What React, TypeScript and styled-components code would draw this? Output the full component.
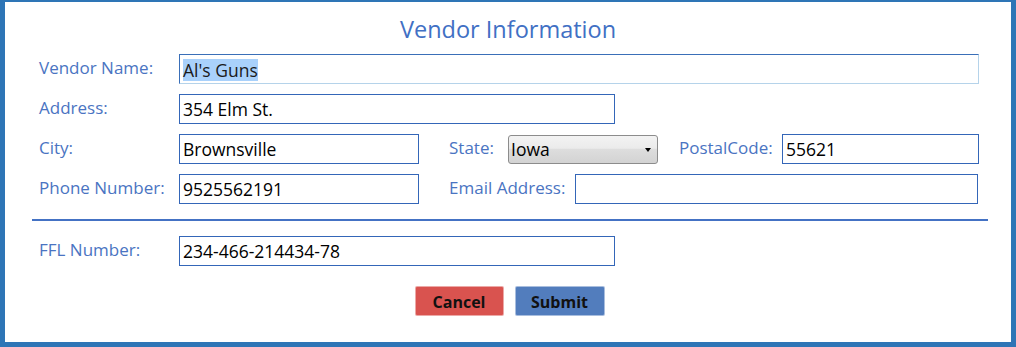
import React from "react";
import styled, { createGlobalStyle } from "styled-components";

const Global = createGlobalStyle`
  html, body { margin: 0; padding: 0; background: #ffffff; }
  body { font-family: "Open Sans", "Noto Sans", sans-serif; }
  * { box-sizing: border-box; }
`;

const Frame = styled.div`
  width: 1016px;
  height: 347px;
  border-style: solid;
  border-color: #2e75b6;
  border-width: 2px 5px 5px 5px;
  background: #ffffff;
  display: flex;
  flex-direction: column;
  padding-top: 11px;
`;

const Title = styled.h1`
  margin: 0 0 9px 0;
  font-size: 23.5px;
  line-height: 32px;
  font-weight: 400;
  color: #4170c4;
  text-align: center;
`;

const Rows = styled.div`
  display: flex;
  flex-direction: column;
  gap: 10px;
  padding-left: 34px;
`;

const Row = styled.div`
  display: flex;
  align-items: center;
  height: 30px;
`;

const Label = styled.div<{ $w: number; $ml?: number }>`
  width: ${(p) => p.$w}px;
  margin-left: ${(p) => p.$ml ?? 0}px;
  flex: none;
  font-size: 17px;
  color: #4a74c2;
  line-height: 30px;
  margin-top: -2px;
  white-space: nowrap;
`;

const Field = styled.div<{ $w: number; $focused?: boolean }>`
  width: ${(p) => p.$w}px;
  height: 30px;
  flex: none;
  border: 1px solid #3466b8;
  ${(p) =>
    p.$focused
      ? `border-right-color: #b5d3ea; border-bottom-color: #b5d3ea; border-top-color: #3a6fb8; border-left-color: #3a6fb8;`
      : ""}
  padding: 0 3px;
  font-size: 17.5px;
  line-height: 28px;
  color: #000;
  white-space: nowrap;
  overflow: hidden;
`;

const Selected = styled.span`
  display: inline-block;
  background: #a9d1fb;
  color: #1a1a1a;
  line-height: 22px;
  vertical-align: middle;
  margin-top: -2px;
`;

const Select = styled.div<{ $w: number }>`
  width: ${(p) => p.$w}px;
  height: 29px;
  flex: none;
  border: 1px solid #8c8c8c;
  border-radius: 3px;
  background: linear-gradient(#f3f3f3 0%, #ebebeb 45%, #dddddd 50%, #d3d3d3 100%);
  display: flex;
  align-items: center;
  justify-content: space-between;
  padding: 0 6px 0 2px;
  font-size: 17.5px;
  color: #000;
`;

const Arrow = styled.span`
  width: 0;
  height: 0;
  border-left: 3px solid transparent;
  border-right: 3px solid transparent;
  border-top: 4px solid #000;
  margin-top: 1px;
`;

const Divider = styled.hr`
  margin: 15px 23px 15px 27px;
  border: none;
  height: 2px;
  background: #4472c4;
`;

const Buttons = styled.div`
  display: flex;
  justify-content: center;
  gap: 11px;
  margin-top: 20px;
  padding-left: 3px;
`;

const Button = styled.button<{ $bg: string; $w: number }>`
  width: ${(p) => p.$w}px;
  height: 30px;
  background: ${(p) => p.$bg};
  border: 1px solid rgba(255, 255, 255, 0.5);
  border-radius: 2px;
  font-family: "Open Sans", "Noto Sans", sans-serif;
  font-weight: 700;
  font-size: 16px;
  color: #111;
  padding: 2px 0 0;
  line-height: 26px;
`;

export default function App() {
  return (
    <>
      <Global />
      <Frame>
        <Title>Vendor Information</Title>
        <Rows>
          <Row>
            <Label $w={140}>Vendor Name:</Label>
            <Field $w={800} $focused>
              <Selected>Al's Guns</Selected>
            </Field>
          </Row>
          <Row>
            <Label $w={140}>Address:</Label>
            <Field $w={436}>354 Elm St.</Field>
          </Row>
          <Row>
            <Label $w={140}>City:</Label>
            <Field $w={240}>Brownsville</Field>
            <Label $w={59} $ml={30}>State:</Label>
            <Select $w={150}>
              <span>Iowa</span>
              <Arrow />
            </Select>
            <Label $w={103} $ml={21}>PostalCode:</Label>
            <Field $w={197}>55621</Field>
          </Row>
          <Row>
            <Label $w={140}>Phone Number:</Label>
            <Field $w={240}>9525562191</Field>
            <Label $w={126} $ml={30}>Email Address:</Label>
            <Field $w={403}></Field>
          </Row>
        </Rows>
        <Divider />
        <Rows>
          <Row>
            <Label $w={140}>FFL Number:</Label>
            <Field $w={436}>234-466-214434-78</Field>
          </Row>
        </Rows>
        <Buttons>
          <Button $bg="#d9534f" $w={89}>Cancel</Button>
          <Button $bg="#527dbd" $w={90}>Submit</Button>
        </Buttons>
      </Frame>
    </>
  );
}
